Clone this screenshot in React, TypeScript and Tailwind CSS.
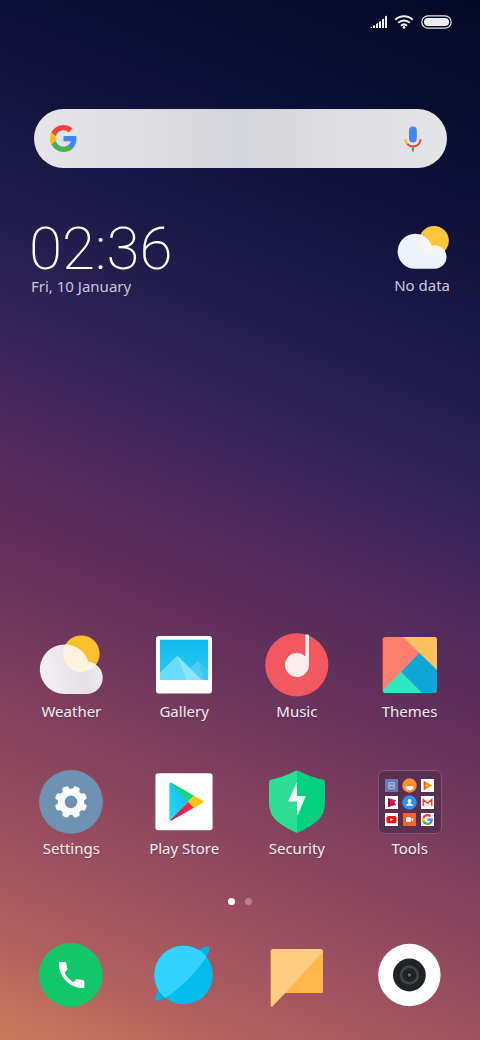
import React from 'react';

interface AppItem {
  name: string;
  icon: React.ReactNode;
}

const GoogleLogo: React.FC<{ className?: string }> = ({ className }) => (
  <svg viewBox="2 2 44 44" className={className} aria-hidden="true">
    <path fill="#4285f4" d="M45.12 24.5c0-1.56-.14-3.06-.4-4.5H24v8.51h11.84c-.51 2.75-2.06 5.08-4.39 6.64v5.52h7.11c4.16-3.83 6.56-9.47 6.56-16.17z" />
    <path fill="#4caf50" d="M24 46c5.94 0 10.92-1.97 14.56-5.33l-7.11-5.52c-1.97 1.32-4.49 2.1-7.45 2.1-5.73 0-10.58-3.87-12.31-9.07H4.34v5.7C7.96 41.07 15.4 46 24 46z" />
    <path fill="#fbc108" d="M11.69 28.18C11.25 26.86 11 25.45 11 24s.25-2.86.69-4.18v-5.7H4.34A21.99 21.99 0 0 0 2 24c0 3.55.85 6.91 2.34 9.88l7.35-5.7z" />
    <path fill="#f44336" d="M24 10.75c3.23 0 6.13 1.11 8.41 3.29l6.31-6.31C34.91 4.18 29.93 2 24 2 15.4 2 7.96 6.93 4.34 14.12l7.35 5.7c1.73-5.2 6.58-9.07 12.31-9.07z" />
  </svg>
);

const MicIcon = () => (
  <svg viewBox="0 0 18 26" className="h-[26px] w-[18px]" aria-hidden="true">
    <rect x="5" y="0.5" width="7.8" height="16" rx="3.9" fill="#4285f4" />
    <path d="M1.4 13.2a7.6 7.6 0 0 0 2.6 5.4" fill="none" stroke="#fbb408" strokeWidth="2" />
    <path d="M3.4 18.1a7.6 7.6 0 0 0 13.1-4.9" fill="none" stroke="#ea4335" strokeWidth="2" />
    <path d="M8.9 21.4v4" stroke="#34a853" strokeWidth="2.2" />
  </svg>
);

const StatusBar = () => (
  <header className="flex h-[14px] items-center justify-end gap-[7px] pr-7">
    <svg viewBox="-1 0 18 14" className="h-[14px] w-[18px]" fill="#f1f1f6" role="img" aria-label="Signal">
      <path d="M0 13L2 11.6V13zM3 10.8L5 10V13H3zM6 9L8 8V13H6zM9 7L11 6V13H9zM12 4.4L14 3.4V13H12zM15 1.6L17 .6V13H15z" />
    </svg>
    <svg viewBox="0 0 20 14" className="h-[14px] w-5" fill="none" stroke="#f1f1f6" strokeWidth="2" role="img" aria-label="Wi-Fi">
      <path d="M1.3 4.7a12.6 12.6 0 0 1 17.4 0M4.2 7.8a8.6 8.6 0 0 1 11.6 0M7 10.7a4.6 4.6 0 0 1 6 0" />
      <circle cx="10" cy="12.4" r="1.3" fill="#f1f1f6" stroke="none" />
    </svg>
    <svg viewBox="0 0 31 14" className="h-[14px] w-[31px]" role="img" aria-label="Battery">
      <rect x="0.8" y="0.8" width="29.4" height="12.4" rx="6.2" fill="none" stroke="#e8e8f0" strokeWidth="1.2" />
      <rect x="3" y="3" width="25" height="8" rx="4" fill="#eeeef3" />
    </svg>
  </header>
);

const SearchBar = () => (
  <form
    onSubmit={(e) => e.preventDefault()}
    className="ml-[34px] mr-[33px] mt-20 flex h-[59px] items-center rounded-full bg-linear-to-r from-[#e5e5ea] via-[#d5d6db] to-[#e5e5e9] pl-4 pr-[25px]"
  >
    <GoogleLogo className="size-[27px] shrink-0" />
    <input type="search" aria-label="Search" className="h-full min-w-0 flex-1 bg-transparent px-3 text-base text-slate-800 outline-none" />
    <button type="button" aria-label="Voice search">
      <MicIcon />
    </button>
  </form>
);

const ClockWidget = () => (
  <section className="mt-[53px] flex items-start justify-between pl-[31px] pr-[30px]">
    <div>
      <div className="-ml-0.5 font-[Roboto,sans-serif] text-[60px] font-extralight leading-[56px] text-white">02:36</div>
      <div className="text-[15px] leading-[18px] text-[#cbc7da]">Fri, 10 January</div>
    </div>
    <div className="flex flex-col items-end pt-1">
      <svg viewBox="-1 0 54 45" className="h-[45px] w-[54px]" aria-hidden="true">
        <defs>
          <clipPath id="widgetCloud">
            <path d="M18.3 43.7A17.4 17.4 0 1 1 34.6 21A11.6 11.6 0 1 1 38.5 43.7Z" />
          </clipPath>
        </defs>
        <circle cx="37" cy="15.8" r="14.8" fill="#ffc639" />
        <g clipPath="url(#widgetCloud)">
          <rect width="54" height="45" fill="#edf2fb" />
          <circle cx="37" cy="15.8" r="14.8" fill="#f5f5f1" />
        </g>
      </svg>
      <div className="mt-[6px] text-[15px] leading-[18px] text-[#cbc9dc]">No data</div>
    </div>
  </section>
);

const WeatherIcon = () => (
  <svg viewBox="0 0 64 64" className="size-16" aria-hidden="true">
    <defs>
      <linearGradient id="cloudFill" x1="0" y1="0.6" x2="1" y2="0.4">
        <stop offset="0" stopColor="#f4f1f4" />
        <stop offset="0.65" stopColor="#e6dfe7" />
        <stop offset="1" stopColor="#f1edf2" />
      </linearGradient>
      <clipPath id="cloudShape">
        <path d="M25.3 61A24.8 24.8 0 1 1 49.3 28.7A16.2 16.2 0 0 1 47.7 61Z" />
      </clipPath>
    </defs>
    <circle cx="42.3" cy="20.7" r="18.3" fill="#fbbf2d" />
    <g clipPath="url(#cloudShape)">
      <rect width="64" height="64" fill="url(#cloudFill)" />
      <circle cx="42.3" cy="20.7" r="18.3" fill="#fdf3dc" />
    </g>
  </svg>
);

const GalleryIcon = () => (
  <svg viewBox="0 0 64 64" className="size-16" aria-hidden="true">
    <defs>
      <linearGradient id="sky" x1="0" y1="0" x2="0" y2="1">
        <stop offset="0" stopColor="#10bbe9" />
        <stop offset="1" stopColor="#2bc9f5" />
      </linearGradient>
    </defs>
    <rect x="4" y="3" width="56" height="57.6" rx="3" fill="#fff" />
    <rect x="8" y="6.7" width="48" height="40.3" fill="url(#sky)" />
    <path d="M33 39.5L46.3 27.7L56 37V47H33Z" fill="#4dd0f5" />
    <path d="M46.3 27.7L56 37V47H52Z" fill="#3bc7f0" />
    <path d="M8 39.7L25.3 22.7L49.7 47H8Z" fill="#6adbfb" />
    <path d="M25.3 22.7L49.7 47H34.7Z" fill="#8ae5fd" />
  </svg>
);

const MusicIcon = () => (
  <svg viewBox="0 0 64 64" className="size-16" aria-hidden="true">
    <circle cx="31.8" cy="31.8" r="31.6" fill="#f1595f" />
    <path d="M40.4 1.5h2.4l1.2.6V32a12 12 0 1 1-3.6-8.6Z" fill="#fdeced" />
  </svg>
);

const ThemesIcon = () => (
  <svg viewBox="0 0 64 64" className="size-16" aria-hidden="true">
    <defs>
      <clipPath id="themeTile">
        <rect x="4.7" y="4" width="54.3" height="56" rx="3" />
      </clipPath>
    </defs>
    <g clipPath="url(#themeTile)">
      <rect x="4" y="4" width="56" height="56" fill="#ff7e6e" />
      <path d="M25.3 4H60V38L41.3 20Z" fill="#fec161" />
      <path d="M41.3 20L60 38V60H44L23 39Z" fill="#0ea5d7" />
      <path d="M23 39L44 60H4V58Z" fill="#2ce9c1" />
    </g>
  </svg>
);

const SettingsIcon = () => (
  <svg viewBox="0 0 64 64" className="size-16" aria-hidden="true">
    <circle cx="32" cy="31.9" r="31.9" fill="#6f92b3" />
    <g fill="#f9fbfd">
      {[22.5, 67.5, 112.5, 157.5, 202.5, 247.5, 292.5, 337.5].map((angle) => (
        <path key={angle} transform={`rotate(${angle} 32 31.9)`} d="M27.8 21L29 16.6Q29.2 15.9 30 15.8Q32 15.5 34 15.8Q34.8 15.9 35 16.6L36.2 21Z" />
      ))}
    </g>
    <circle cx="32" cy="31.9" r="9.7" fill="none" stroke="#f9fbfd" strokeWidth="6.8" />
  </svg>
);

const PlayStoreIcon = () => (
  <svg viewBox="0 0 64 64" className="size-16" aria-hidden="true">
    <defs>
      <linearGradient id="playBlue" x1="1" y1="0" x2="0" y2="1">
        <stop offset="0" stopColor="#12b5f0" />
        <stop offset="0.6" stopColor="#1ccdf3" />
        <stop offset="1" stopColor="#25dcf5" />
      </linearGradient>
      <linearGradient id="playRed" x1="1" y1="0" x2="0" y2="1">
        <stop offset="0" stopColor="#fb3347" />
        <stop offset="1" stopColor="#c4164f" />
      </linearGradient>
    </defs>
    <rect x="3.4" y="3.3" width="57.2" height="57" rx="3" fill="#fff" />
    <path d="M17.4 14.2Q17.4 12.6 19 12.8L36.2 31.7L19 50.6Q17.4 50.8 17.4 49.2Z" fill="url(#playBlue)" />
    <path d="M18.2 12.9Q19 12.5 20 13.1L42 25.7L36.2 31.7Z" fill="#12d877" />
    <path d="M42 25.7L50.8 30.6Q52.3 31.7 50.8 32.8L42 37.7L36.2 31.7Z" fill="#ffc50b" />
    <path d="M36.2 31.7L42 37.7L20 50.3Q19 50.9 18.2 50.5Z" fill="url(#playRed)" />
  </svg>
);

const SecurityIcon = () => (
  <svg viewBox="0 0 64 64" className="size-16" aria-hidden="true">
    <path d="M32 .5Q30.5.6 29.5 1.2Q18.5 7.2 5.6 9.7Q4 10.1 4 11.7V33Q4 43.5 11 50.3Q18.5 57 29.3 61.8Q30.7 62.7 32 62.7Z" fill="#2bdd95" />
    <path d="M32 .5Q33.5.6 34.5 1.2Q45.5 7.2 58.4 9.7Q60 10.1 60 11.7V33Q60 43.5 53 50.3Q45.5 57 34.7 61.8Q33.3 62.7 32 62.7Z" fill="#05d080" />
    <path d="M31.5 13L23 31.4H32V26Z" fill="#fff" />
    <path d="M32 26V31.4L32.7 45.2L40.9 26Z" fill="#e2f9ef" />
    <path d="M31.3 13.4V31.4H32.5V45" fill="none" stroke="#fff" strokeWidth="0.8" />
  </svg>
);

const ToolsFolder = () => (
  <div className="grid size-16 grid-cols-3 place-content-center gap-x-[5px] gap-y-1 rounded-md border border-[#835673] bg-[#5a2f50] px-1.5">
    <svg viewBox="0 0 13 13" className="size-[13px]" aria-hidden="true">
      <rect width="13" height="13" fill="#6a78b7" />
      <path d="M3.8 3.7h5.4v2.5H3.8zM3.8 6.9h5.4v2.8H3.8z" fill="none" stroke="#c2cae9" strokeWidth="0.9" />
    </svg>
    <svg viewBox="0 0 13 13" className="size-[13px] overflow-visible" aria-hidden="true">
      <circle cx="6.5" cy="6.5" r="7.2" fill="#fa8f34" />
      <path d="M2.5 7.2h8a4 4 0 0 1-8 0Z" fill="#fff" />
    </svg>
    <svg viewBox="0 0 13 13" className="size-[13px]" aria-hidden="true">
      <rect width="13" height="13" fill="#fff" />
      <path d="M2.8 2L11.5 6.5L2.8 11Z" fill="#fb9a17" />
      <path d="M2.8 2L5 3.2L3.5 6.5L5 9.9L2.8 11Z" fill="#f4511e" />
      <circle cx="6" cy="6.5" r="1.7" fill="#ffc928" stroke="#e8641b" strokeWidth="0.7" />
    </svg>
    <svg viewBox="0 0 13 13" className="size-[13px]" aria-hidden="true">
      <rect width="13" height="13" fill="#fff" />
      <path d="M3 2.2L11.2 4.2L9.5 6.5L11.2 8.9L3 11Z" fill="#d0184e" />
      <path d="M3 2.2L4.8 3V10.3L3 11Z" fill="#7c1336" />
    </svg>
    <svg viewBox="0 0 13 13" className="size-[13px] overflow-visible" aria-hidden="true">
      <circle cx="6.5" cy="6.5" r="7.2" fill="#2e93f3" />
      <circle cx="6.5" cy="4.9" r="1.9" fill="#fff" />
      <path d="M5.6 6h1.8v1.6l2.3.8v1.4H3.3V8.4l2.3-.8Z" fill="#fff" />
    </svg>
    <svg viewBox="0 0 13 13" className="size-[13px]" aria-hidden="true">
      <rect width="13" height="13" fill="#fff" />
      <path d="M2.2 3.5h8.6v6.4H2.2z" fill="#ece8e8" />
      <path d="M2.2 10V3.6L6.5 7.2L10.8 3.6V10" fill="none" stroke="#dc4437" strokeWidth="1.4" />
    </svg>
    <svg viewBox="0 0 13 13" className="size-[13px]" aria-hidden="true">
      <rect width="13" height="13" fill="#fff" />
      <rect x="1.5" y="3" width="10" height="7.2" rx="1.8" fill="#fb0d0d" />
      <path d="M5.4 4.9L8.2 6.6L5.4 8.3Z" fill="#fff" />
    </svg>
    <svg viewBox="0 0 13 13" className="size-[13px]" aria-hidden="true">
      <rect width="13" height="13" fill="#eb6431" />
      <rect x="3" y="4.2" width="5" height="4.7" rx="0.6" fill="#fff" />
      <path d="M8 6.5L10.2 4.6V8.6Z" fill="#fff" />
    </svg>
    <div className="flex size-[13px] items-center justify-center bg-white">
      <GoogleLogo className="size-[11px]" />
    </div>
  </div>
);

const PhoneIcon = () => (
  <svg viewBox="0 0 64 64" className="size-16" aria-hidden="true">
    <circle cx="31.8" cy="32" r="31.9" fill="#12c66a" />
    <path d="M20.6 19H26.3Q27 19 27.1 19.7L28.4 26Q28.5 26.6 28.1 27L25.5 29.8Q28.6 36.2 34.4 39.2L37 36.4Q37.5 36 38.1 36.1L44.6 37.2Q45.3 37.4 45.3 38V44.3Q45.3 45 44.6 45.1Q34.3 45.3 27 38Q19.3 30 19.9 19.7Q20 19 20.6 19Z" fill="#fff" />
  </svg>
);

const BrowserIcon = () => (
  <svg viewBox="0 0 64 64" className="size-16" aria-hidden="true">
    <defs>
      <clipPath id="planet">
        <circle cx="31.6" cy="32" r="29.3" />
      </clipPath>
    </defs>
    <ellipse cx="30.4" cy="30.6" rx="37.5" ry="8" transform="rotate(-45 30.4 30.6)" fill="#02b3e6" />
    <circle cx="31.6" cy="32" r="29.3" fill="#02bced" />
    <g clipPath="url(#planet)" fill="#33d3ff">
      <path d="M-10 71L71 -10H-10Z" />
      <ellipse cx="30.4" cy="30.6" rx="37.5" ry="8" transform="rotate(-45 30.4 30.6)" />
    </g>
  </svg>
);

const MessagesIcon = () => (
  <svg viewBox="0 0 64 64" className="size-16" aria-hidden="true">
    <path d="M8.5 6H55.5Q58 6 58 8.5V47.5Q58 50 55.5 50H20.3L7.6 63.3Q5.7 64.6 5.7 62.5V8.5Q5.7 6 8.5 6Z" fill="#ffcb80" />
    <path d="M58 8.6V47.5Q58 50 55.5 50H20.3Z" fill="#ffb64b" />
  </svg>
);

const CameraIcon = () => (
  <svg viewBox="0 0 64 64" className="size-16" aria-hidden="true">
    <circle cx="31.4" cy="32" r="31.2" fill="#fff" />
    <circle cx="31.4" cy="32" r="16.4" fill="#212426" />
    <circle cx="31.4" cy="32" r="8.4" fill="none" stroke="#42464a" strokeWidth="2.6" />
    <circle cx="31.4" cy="32" r="4.7" fill="#191c1e" stroke="#2c2f32" strokeWidth="0.8" />
    <circle cx="31.4" cy="32" r="1.8" fill="#66696b" />
  </svg>
);

const apps: AppItem[] = [
  { name: 'Weather', icon: <WeatherIcon /> },
  { name: 'Gallery', icon: <GalleryIcon /> },
  { name: 'Music', icon: <MusicIcon /> },
  { name: 'Themes', icon: <ThemesIcon /> },
  { name: 'Settings', icon: <SettingsIcon /> },
  { name: 'Play Store', icon: <PlayStoreIcon /> },
  { name: 'Security', icon: <SecurityIcon /> },
  { name: 'Tools', icon: <ToolsFolder /> },
];

const dock: AppItem[] = [
  { name: 'Phone', icon: <PhoneIcon /> },
  { name: 'Browser', icon: <BrowserIcon /> },
  { name: 'Messages', icon: <MessagesIcon /> },
  { name: 'Camera', icon: <CameraIcon /> },
];

export default function App() {
  return (
    <div className="flex min-h-screen flex-col bg-[linear-gradient(202deg,#020824_0%,#080e2e_8%,#0f1139_18%,#1b1947_29%,#2f2359_40%,#4c295a_50%,#65315a_61%,#7f3e5c_71%,#9b5060_83%,#b26161_92%,#c97c5c_100%)] pt-[15px] font-['Noto_Sans',sans-serif]">
      <StatusBar />
      <SearchBar />
      <ClockWidget />

      <main className="mt-auto grid grid-cols-4 gap-y-[49px] pl-[15px] pr-[14px] pt-12">
        {apps.map((app) => (
          <button key={app.name} type="button" className="flex flex-col items-center gap-1">
            {app.icon}
            <span className="text-[15px] leading-5 text-[#f3edf2] text-shadow-sm">{app.name}</span>
          </button>
        ))}
      </main>

      <div className="mt-10 flex justify-center gap-[10px]">
        <span className="size-[7px] rounded-full bg-white" />
        <span className="size-[7px] rounded-full bg-white/30" />
      </div>

      <nav className="mt-[38px] grid grid-cols-4 pl-[15px] pr-[14px] pb-[33px]">
        {dock.map((app) => (
          <button key={app.name} type="button" aria-label={app.name} className="flex justify-center">
            {app.icon}
          </button>
        ))}
      </nav>
    </div>
  );
}
